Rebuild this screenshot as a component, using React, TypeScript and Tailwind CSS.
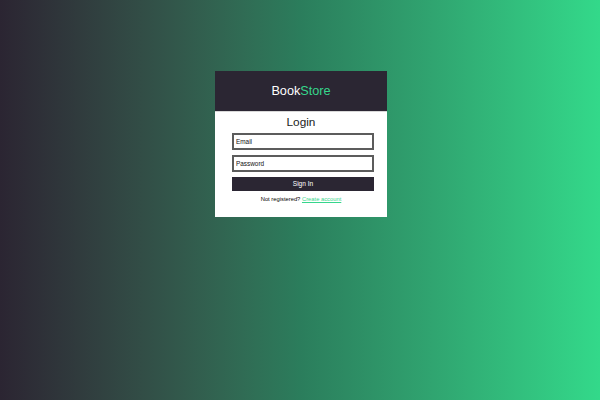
import React from "react";

const App = () => {
  return (
    <div
      className="w-[600px] h-[400px] bg-gradient-to-r from-[#2b2532] via-[#2b7d5c] to-[#33d98a] overflow-hidden"
      style={{ fontFamily: '"Liberation Sans", Arial, sans-serif' }}
    >
      <div className="ml-[215px] mt-[71px] w-[172px] bg-white flex flex-col">
        <div className="h-[41px] bg-[#2b2633] flex items-center justify-center border-b border-[#d8d8d8]">
          <span className="text-[12.7px] text-white leading-none">
            Book<span className="text-[#36d68c]">Store</span>
          </span>
        </div>
        <div className="flex flex-col px-[17px] pb-[14px]">
          <p className="text-[11.8px] text-[#222] text-center leading-none mt-[5px] mb-[4px]">Login</p>
          <input
            className="self-start w-[142px] h-[17px] border-2 border-[#5c5c5c] px-[2px] text-[6.4px] text-[#111] placeholder:text-[#111] outline-none"
            placeholder="Email"
          />
          <input
            type="password"
            className="self-start w-[142px] h-[17px] mt-[5px] border-2 border-[#5c5c5c] px-[2px] text-[6.4px] text-[#111] placeholder:text-[#111] outline-none"
            placeholder="Password"
          />
          <button className="self-start w-[142px] h-[14px] mt-[5px] bg-[#2b2633] text-white text-[6.6px] leading-none">
            Sign In
          </button>
          <p className="mt-[6px] text-[5.8px] text-center text-black leading-none">
            Not registered?{" "}
            <a href="#" className="text-[#36d68c] underline">
              Create account
            </a>
          </p>
        </div>
      </div>
    </div>
  );
};

export default App;
